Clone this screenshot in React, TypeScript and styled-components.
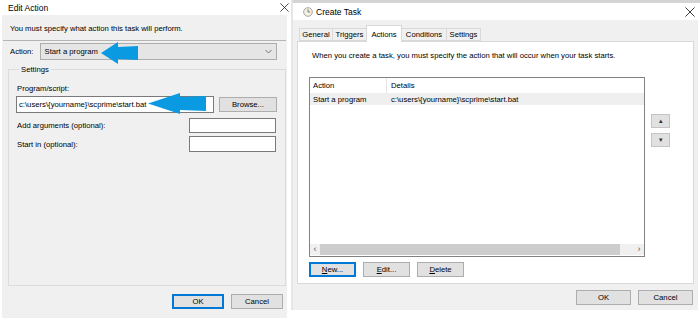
import styled, { createGlobalStyle } from 'styled-components';

const GlobalStyle = createGlobalStyle`
  html, body {
    margin: 0;
    padding: 0;
    background: #ffffff;
  }
  body {
    font-family: 'Liberation Sans', Arial, sans-serif;
    font-size: 7.7px;
    color: #000000;
  }
`;

const CloseIcon = ({ size = 9 }: { size?: number }) => (
  <svg width={size} height={size} viewBox="0 0 10 10">
    <path d="M0.5 0.5 L9.5 9.5 M9.5 0.5 L0.5 9.5" stroke="#222" strokeWidth="0.9" />
  </svg>
);

const ClockIcon = () => (
  <svg width="10" height="10" viewBox="0 0 12 12">
    <circle cx="6" cy="6" r="5.2" fill="#f4f1e6" stroke="#8a8a7a" strokeWidth="0.9" />
    <path d="M6 2.6 V6 H8.6" stroke="#555" strokeWidth="0.9" fill="none" />
  </svg>
);

const Chevron = () => (
  <svg width="7" height="5" viewBox="0 0 7 5">
    <path d="M0.5 1 L3.5 4 L6.5 1" stroke="#555" strokeWidth="0.8" fill="none" />
  </svg>
);

const BlueArrow = ({ w, h, head, shaft }: { w: number; h: number; head: number; shaft: number }) => {
  const top = (h - shaft) / 2;
  return (
    <svg width={w} height={h} viewBox={`0 0 ${w} ${h}`}>
      <path
        d={`M0 ${h / 2} L${head} 0 L${head} ${top} L${w} ${top - 1} L${w} ${top + shaft + 1} L${head} ${top + shaft} L${head} ${h} Z`}
        fill="#0a9ae2"
      />
    </svg>
  );
};

const App = () => {
  return (
    <Page>
      <GlobalStyle />
      <LeftWindow>
        <TitleBar>
          <TitleText>Edit Action</TitleText>
          <CloseIcon />
        </TitleBar>
        <LeftBody>
          <Intro>You must specify what action this task will perform.</Intro>
          <Separator />
          <ActionRow>
            <span>Action:</span>
            <Combo>
              <span>Start a program</span>
              <Chevron />
            </Combo>
          </ActionRow>
          <Group>
            <Legend>Settings</Legend>
            <FieldLabel>Program/script:</FieldLabel>
            <ProgramRow>
              <TextInput $width={198} $height={17}>
                c:\users\{'{yourname}'}\scprime\start.bat
              </TextInput>
              <Button $width={58}>Browse...</Button>
            </ProgramRow>
            <OptionRow $top={5}>
              <span>Add arguments (optional):</span>
              <TextInput $width={87} $height={15} />
            </OptionRow>
            <OptionRow $top={3}>
              <span>Start in (optional):</span>
              <TextInput $width={87} $height={16} />
            </OptionRow>
          </Group>
          <FooterRow $right={4} $top={8} $bottom={9}>
            <Button $width={52} $primary>OK</Button>
            <Button $width={52}>Cancel</Button>
          </FooterRow>
          <ArrowSpot $left={99} $top={27}>
            <BlueArrow w={37} h={22} head={17} shaft={12} />
          </ArrowSpot>
          <ArrowSpot $left={146} $top={78}>
            <BlueArrow w={58} h={21} head={32} shaft={13} />
          </ArrowSpot>
        </LeftBody>
      </LeftWindow>

      <RightWindow>
        <BackStrip />
        <TitleBar $tall>
          <TitleGroup>
            <ClockIcon />
            <TitleText>Create Task</TitleText>
          </TitleGroup>
          <CloseIcon size={10} />
        </TitleBar>
        <RightBody>
          <TabBar>
            <Tab $width={34}>General</Tab>
            <Tab $width={35}>Triggers</Tab>
            <Tab $width={36} $active>Actions</Tab>
            <Tab $width={46}>Conditions</Tab>
            <Tab $width={35}>Settings</Tab>
          </TabBar>
          <TabPanel>
            <PanelText>
              When you create a task, you must specify the action that will occur when your task starts.
            </PanelText>
            <ListArea>
              <ListView>
                <ListHeader>
                  <ActionCol>Action</ActionCol>
                  <DetailsCol>Details</DetailsCol>
                </ListHeader>
                <ListRow>
                  <ActionCol>Start a program</ActionCol>
                  <DetailsCol>c:\users\{'{yourname}'}\scprime\start.bat</DetailsCol>
                </ListRow>
                <ListFill />
                <ScrollBar>
                  <ScrollArrow>‹</ScrollArrow>
                  <ScrollThumb />
                  <ScrollArrow>›</ScrollArrow>
                </ScrollBar>
              </ListView>
              <MoveButtons>
                <MoveButton>▴</MoveButton>
                <MoveButton>▾</MoveButton>
              </MoveButtons>
            </ListArea>
            <ListButtons>
              <Button $width={47} $primary><u>N</u>ew...</Button>
              <Button $width={47}><u>E</u>dit...</Button>
              <Button $width={47}><u>D</u>elete</Button>
            </ListButtons>
          </TabPanel>
          <FooterRow $right={1} $top={6} $bottom={5}>
            <Button $width={55}>OK</Button>
            <Button $width={55}>Cancel</Button>
          </FooterRow>
        </RightBody>
      </RightWindow>
    </Page>
  );
};

const Page = styled.div`
  display: flex;
  width: 700px;
  height: 320px;
  overflow: hidden;
  background: #ffffff;
`;

const LeftWindow = styled.div`
  width: 289px;
  height: 318px;
  display: flex;
  flex-direction: column;
  background: #ffffff;
`;

const TitleBar = styled.div<{ $tall?: boolean }>`
  height: ${(p) => (p.$tall ? 17 : 15)}px;
  flex-shrink: 0;
  display: flex;
  align-items: center;
  justify-content: space-between;
  padding: ${(p) => (p.$tall ? '0 5px 0 10px' : '0 0 0 8px')};
`;

const TitleGroup = styled.div`
  display: flex;
  align-items: center;
  gap: 3px;
`;

const TitleText = styled.span`
  font-size: 8.5px;
  color: #000;
`;

const LeftBody = styled.div`
  flex: 1;
  position: relative;
  margin: 0 2px;
  background: #f0f0f0;
  display: flex;
  flex-direction: column;
`;

const Intro = styled.div`
  padding: 8px 0 0 8px;
  line-height: 12px;
`;

const Separator = styled.div`
  height: 1px;
  margin: 5px 1px 0 1px;
  background: #b4b4b4;
`;

const ActionRow = styled.div`
  display: flex;
  align-items: center;
  margin-top: 2px;
  padding-left: 8px;
  gap: 6px;
`;

const Combo = styled.div`
  width: 237px;
  height: 17px;
  box-sizing: border-box;
  display: flex;
  align-items: center;
  justify-content: space-between;
  padding: 0 4px 0 4px;
  background: #e5e5e5;
  border: 1px solid #adadad;
`;

const Group = styled.fieldset`
  flex: 1;
  margin: 5px 1px 0 6px;
  padding: 5px 8px 0 8px;
  border: 1px solid #dcdcdc;
  border-radius: 0;
  display: flex;
  flex-direction: column;
  min-width: 0;
`;

const Legend = styled.legend`
  padding: 0 2px;
  margin-left: 2px;
  font-size: 7.7px;
`;

const FieldLabel = styled.div`
  line-height: 12px;
  margin-top: 4px;
`;

const ProgramRow = styled.div`
  display: flex;
  align-items: center;
  margin: 1px 0 0 -1px;
  gap: 5px;
`;

const OptionRow = styled.div<{ $top: number }>`
  display: flex;
  align-items: center;
  justify-content: space-between;
  margin-top: ${(p) => p.$top}px;
  padding-right: 1px;
`;

const TextInput = styled.div<{ $width: number; $height: number }>`
  width: ${(p) => p.$width}px;
  height: ${(p) => p.$height}px;
  box-sizing: border-box;
  background: #ffffff;
  border: 1px solid #7a7a7a;
  padding-left: 2px;
  display: flex;
  align-items: center;
  white-space: nowrap;
  overflow: hidden;
`;

const Button = styled.div<{ $width: number; $primary?: boolean }>`
  width: ${(p) => p.$width}px;
  height: 15px;
  box-sizing: border-box;
  display: flex;
  align-items: center;
  justify-content: center;
  background: #e1e1e1;
  border: 1px solid ${(p) => (p.$primary ? '#0078d7' : '#adadad')};
  box-shadow: ${(p) => (p.$primary ? 'inset 0 0 0 1px #0078d7' : 'none')};
  font-size: 7.7px;
`;

const FooterRow = styled.div<{ $right: number; $top: number; $bottom: number }>`
  display: flex;
  justify-content: flex-end;
  gap: 7px;
  flex-shrink: 0;
  padding: ${(p) => `${p.$top}px ${p.$right}px ${p.$bottom}px 0`};
`;

const ArrowSpot = styled.div<{ $left: number; $top: number }>`
  position: absolute;
  left: ${(p) => p.$left}px;
  top: ${(p) => p.$top}px;
  line-height: 0;
`;

const RightWindow = styled.div`
  flex: 1;
  margin-left: 2px;
  display: flex;
  flex-direction: column;
  background: #ffffff;
  border-left: 2px solid #e6e6e6;
  height: 310px;
`;

const BackStrip = styled.div`
  height: 3px;
  flex-shrink: 0;
  background: #d4d4d4;
`;

const RightBody = styled.div`
  flex: 1;
  min-height: 0;
  margin: 0 2px 0 0;
  background: #f0f0f0;
  display: flex;
  flex-direction: column;
  padding: 5px 4px 0 4px;
`;

const TabBar = styled.div`
  display: flex;
  align-items: flex-end;
  flex-shrink: 0;
  padding-left: 3px;
  height: 16px;
`;

const Tab = styled.div<{ $width: number; $active?: boolean }>`
  width: ${(p) => p.$width}px;
  height: ${(p) => (p.$active ? 17 : 13)}px;
  box-sizing: border-box;
  display: flex;
  align-items: center;
  justify-content: center;
  background: ${(p) => (p.$active ? '#ffffff' : '#f0f0f0')};
  border: 1px solid #d9d9d9;
  border-bottom: ${(p) => (p.$active ? 'none' : '1px solid #d9d9d9')};
  margin-bottom: ${(p) => (p.$active ? -1 : 0)}px;
  margin-left: -1px;
  position: relative;
  z-index: ${(p) => (p.$active ? 1 : 0)};
`;

const TabPanel = styled.div`
  height: 243px;
  flex-shrink: 0;
  box-sizing: border-box;
  background: #ffffff;
  border: 1px solid #d9d9d9;
  display: flex;
  flex-direction: column;
  padding: 8px 0 0 11px;
`;

const PanelText = styled.div`
  line-height: 12px;
  padding-left: 3px;
`;

const ListArea = styled.div`
  display: flex;
  gap: 6px;
  margin-top: 15px;
`;

const ListView = styled.div`
  width: 336px;
  height: 180px;
  box-sizing: border-box;
  border: 1px solid #828282;
  display: flex;
  flex-direction: column;
`;

const ListHeader = styled.div`
  display: flex;
  height: 15px;
  align-items: center;
  flex-shrink: 0;
`;

const ListRow = styled.div`
  display: flex;
  height: 12px;
  align-items: center;
  background: #efefef;
  flex-shrink: 0;
`;

const ActionCol = styled.div`
  width: 77px;
  box-sizing: border-box;
  padding-left: 3px;
  height: 100%;
  display: flex;
  align-items: center;
  ${ListHeader} & {
    border-right: 1px solid #e5e5e5;
  }
`;

const DetailsCol = styled.div`
  padding-left: 4px;
`;

const ListFill = styled.div`
  flex: 1;
`;

const ScrollBar = styled.div`
  height: 11px;
  display: flex;
  align-items: center;
  background: #f0f0f0;
  margin-bottom: 1px;
`;

const ScrollArrow = styled.div`
  width: 10px;
  text-align: center;
  font-size: 9px;
  line-height: 11px;
  color: #606060;
`;

const ScrollThumb = styled.div`
  height: 100%;
  width: 300px;
  background: #cdcdcd;
  margin-right: auto;
`;

const MoveButtons = styled.div`
  display: flex;
  flex-direction: column;
  gap: 5px;
  padding-top: 37px;
`;

const MoveButton = styled.div`
  width: 19px;
  height: 14px;
  box-sizing: border-box;
  background: #e1e1e1;
  border: 1px solid #c4c4c4;
  display: flex;
  align-items: center;
  justify-content: center;
  font-size: 7px;
  color: #333;
`;

const ListButtons = styled.div`
  display: flex;
  gap: 7px;
  margin-top: 5px;
`;

export default App;
